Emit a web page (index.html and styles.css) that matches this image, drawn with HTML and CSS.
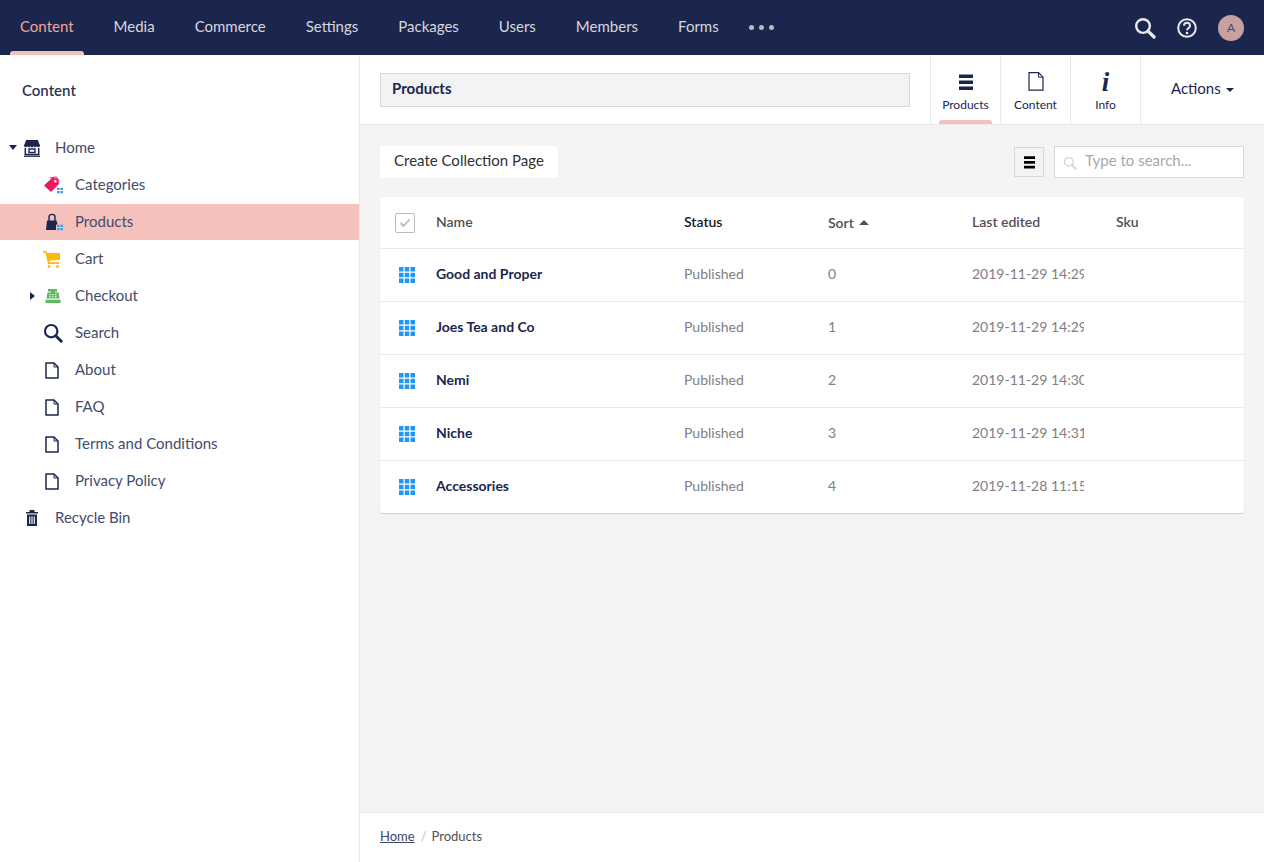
FILE: index.html
```html
<!DOCTYPE html>
<html lang="en">
<head>
    <meta charset="UTF-8">
    <meta name="viewport" content="width=device-width, initial-scale=1.0">
    <title>Content - Products</title>
    <link rel="stylesheet" href="styles.css">
</head>
<body>
    <svg class="defs" width="0" height="0" aria-hidden="true">
        <symbol id="i-search" viewBox="0 0 20 20">
            <circle cx="8.2" cy="8.2" r="6.2" fill="none" stroke="currentColor" stroke-width="2.2"/>
            <path d="M12.8 12.8l5.4 5.4" fill="none" stroke="currentColor" stroke-width="3" stroke-linecap="round"/>
        </symbol>
        <symbol id="i-doc" viewBox="0 0 14 17">
            <path d="M1 1h8l4 4v11H1z" fill="none" stroke="currentColor" stroke-width="1.5" stroke-linejoin="round"/>
            <path d="M9 1v4h4" fill="none" stroke="currentColor" stroke-width="1"/>
        </symbol>
        <symbol id="i-dots" viewBox="0 0 16 16">
            <path d="M0 0h4.500v4.500H0zM5.750 0h4.500v4.500h-4.500zM11.500 0H16v4.500h-4.500zM0 5.750h4.500v4.500H0zM5.750 5.750h4.500v4.500h-4.500zM11.500 5.750H16v4.500h-4.500zM0 11.500h4.500V16H0zM5.750 11.500h4.500V16h-4.500zM11.500 11.500H16V16h-4.500z" fill="#2196f3"/>
        </symbol>
        <symbol id="i-mini" viewBox="0 0 7 7">
            <path d="M0 0h3v3H0zM4 0h3v3H4zM0 4h3v3H0zM4 4h3v3H4z" fill="#3f97f0"/>
        </symbol>
        <symbol id="i-lines" viewBox="0 0 14 16">
            <path d="M0 0h14v3.600H0zM0 6h14v3.600H0zM0 12h14v3.600H0z" fill="currentColor"/>
        </symbol>
    </svg>

    <header class="topbar">
        <nav class="mainnav">
            <a class="navitem active">Content</a>
            <a class="navitem">Media</a>
            <a class="navitem">Commerce</a>
            <a class="navitem">Settings</a>
            <a class="navitem">Packages</a>
            <a class="navitem">Users</a>
            <a class="navitem">Members</a>
            <a class="navitem">Forms</a>
            <span class="navmore"><i></i><i></i><i></i></span>
        </nav>
        <div class="topicons">
            <svg class="topicon" width="22" height="22"><use href="#i-search"/></svg>
            <svg class="topicon" width="22" height="22" viewBox="0 0 22 22">
                <circle cx="11" cy="11" r="8.800" fill="none" stroke="currentColor" stroke-width="2"/>
                <path d="M8 8.800c0-4 6-4 6 0 0 2.400-3 2.200-3 4.400" fill="none" stroke="currentColor" stroke-width="2"/>
                <circle cx="11" cy="16" r="1.300" fill="currentColor"/>
            </svg>
            <span class="avatar">A</span>
        </div>
    </header>

    <div class="app">
        <aside class="sidebar">
            <h2 class="sidebar-title">Content</h2>
            <ul class="tree">
                <li class="treerow level0">
                    <span class="caret down"></span>
                    <svg class="treeicon shift" width="18" height="18" viewBox="0 0 18 18">
                        <path d="M3.200 1h11.600L17 6.600c0 1-.8 1.600-1.600 1.600-.9 0-1.600-.6-1.600-1.500 0 .9-.7 1.500-1.600 1.500s-1.600-.6-1.600-1.500c0 .9-.7 1.500-1.600 1.500s-1.600-.6-1.600-1.500c0 .9-.7 1.500-1.600 1.500S4.200 7.600 4.200 6.700c0 .9-.7 1.500-1.600 1.500C1.800 8.200 1 7.600 1 6.600z" fill="#1b264f"/>
                        <path d="M2.300 9v6.500h13.400V9" fill="none" stroke="#1b264f" stroke-width="1.500"/>
                        <path d="M6 10h6v3.500H6z" fill="none" stroke="#1b264f" stroke-width="1.400"/>
                        <path d="M1 17.200h16" stroke="#1b264f" stroke-width="1.300"/>
                    </svg>
                    <span>Home</span>
                </li>
                <li class="treerow level1">
                    <svg class="treeicon" width="20" height="18" viewBox="0 0 20 18">
                        <path d="M1.500 9.500L9 2.500l5.500.5 1 5L8 15.500z" fill="#f0185f" stroke="#f0185f" stroke-linejoin="round"/>
                        <path d="M7 1.800l6.500-.8 2.700 4.500" fill="none" stroke="#f0185f"/>
                        <circle cx="12.300" cy="5.300" r="1.200" fill="#fff"/>
                        <use href="#i-mini" x="14" y="11.500" width="6" height="6"/>
                    </svg>
                    <span>Categories</span>
                </li>
                <li class="treerow level1 selected">
                    <svg class="treeicon" width="20" height="18" viewBox="0 0 20 18">
                        <path d="M4 7.500h9.500l1 3.500-1.500 1v5H3z" fill="#1b264f"/>
                        <path d="M6 8V4c0-3.500 6-3.500 6 0v4" fill="none" stroke="#1b264f" stroke-width="1.400"/>
                        <use href="#i-mini" x="14" y="11.500" width="6" height="6"/>
                    </svg>
                    <span>Products</span>
                </li>
                <li class="treerow level1">
                    <svg class="treeicon shift" width="18" height="18" viewBox="0 0 18 18">
                        <path d="M0 1h3.500l.8 2H17v6.800l-10.500 1 .2 1.400H16v1.800H5L2.500 2.800H0z" fill="#fdb913"/>
                        <circle cx="6" cy="16.500" r="1.400" fill="#fdb913"/>
                        <circle cx="14.500" cy="16.500" r="1.400" fill="#fdb913"/>
                    </svg>
                    <span>Cart</span>
                </li>
                <li class="treerow level1">
                    <span class="caret right"></span>
                    <svg class="treeicon" width="18" height="18" viewBox="0 0 18 18">
                        <path d="M4 2h9v2.500h-2v1h3.500l1 6H2.500l1-6H7v-1H4z" fill="#5cb85c"/>
                        <path d="M5.500 7h1.300v1.300H5.500zM8.300 7h1.300v1.300H8.300zM11.100 7h1.300v1.300h-1.300zM5.500 9.300h1.300v1.300H5.500zM8.300 9.300h1.300v1.300H8.300zM11.100 9.300h1.300v1.300h-1.300z" fill="#fff"/>
                        <path d="M1.500 12.700h15V16h-15z" fill="#5cb85c"/>
                    </svg>
                    <span>Checkout</span>
                </li>
                <li class="treerow level1">
                    <svg class="treeicon navy" width="20" height="20"><use href="#i-search"/></svg>
                    <span>Search</span>
                </li>
                <li class="treerow level1">
                    <svg class="treeicon navy shift" width="18" height="17"><use href="#i-doc"/></svg>
                    <span>About</span>
                </li>
                <li class="treerow level1">
                    <svg class="treeicon navy shift" width="18" height="17"><use href="#i-doc"/></svg>
                    <span>FAQ</span>
                </li>
                <li class="treerow level1">
                    <svg class="treeicon navy shift" width="18" height="17"><use href="#i-doc"/></svg>
                    <span>Terms and Conditions</span>
                </li>
                <li class="treerow level1">
                    <svg class="treeicon navy shift" width="18" height="17"><use href="#i-doc"/></svg>
                    <span>Privacy Policy</span>
                </li>
                <li class="treerow level0">
                    <svg class="treeicon navy shift" width="18" height="18" viewBox="0 0 18 18">
                        <path d="M3 3h12v1.600H3zM6.500 1h5v2h-5z" fill="currentColor"/>
                        <path d="M4 5.500h10V17H4z" fill="currentColor"/>
                        <path d="M6.200 7.500h1.100V15H6.200zM8.450 7.500h1.100V15h-1.100zM10.700 7.500h1.100V15h-1.100z" fill="#fff"/>
                    </svg>
                    <span>Recycle Bin</span>
                </li>
            </ul>
        </aside>

        <main class="editor">
            <div class="editor-head">
                <div class="namefield">Products</div>
                <div class="tabs">
                    <a class="tab active">
                        <svg class="tabicon" width="14" height="16"><use href="#i-lines"/></svg>
                        <span>Products</span>
                    </a>
                    <a class="tab">
                        <svg class="tabicon" width="16" height="19" viewBox="0 0 16 19">
                            <path d="M1 .7h9.500L15 5.200v13H1z" fill="none" stroke="#1b264f" stroke-width="1.200"/>
                            <path d="M10.500 .7v4.500H15" fill="none" stroke="#1b264f"/>
                        </svg>
                        <span>Content</span>
                    </a>
                    <a class="tab">
                        <span class="infoicon">i</span>
                        <span>Info</span>
                    </a>
                </div>
                <div class="actions">Actions <span class="caret small"></span></div>
            </div>

            <div class="editor-body">
                <div class="toolbar">
                    <button class="createbtn">Create Collection Page</button>
                    <div class="toolbar-right">
                        <span class="layoutbtn"><svg width="11" height="13"><use href="#i-lines"/></svg></span>
                        <label class="searchbox">
                            <svg class="searchicon" width="14" height="14"><use href="#i-search"/></svg>
                            <span>Type to search...</span>
                        </label>
                    </div>
                </div>

                <div class="listview">
                    <div class="row head">
                        <span class="check">
                            <svg width="12" height="10" viewBox="0 0 12 10"><path d="M1.500 5l3 3 6-6.500" fill="none" stroke="#bbb" stroke-width="1.800"/></svg>
                        </span>
                        <span class="cell">Name</span>
                        <span class="cell status">Status</span>
                        <span class="cell sort">Sort <i class="sortcaret"></i></span>
                        <span class="cell">Last edited</span>
                        <span class="cell">Sku</span>
                    </div>
                    <div class="row">
                        <svg class="rowicon" width="16" height="16"><use href="#i-dots"/></svg>
                        <span class="cell name">Good and Proper</span>
                        <span class="cell">Published</span>
                        <span class="cell">0</span>
                        <span class="cell edited">2019-11-29 14:29:33</span>
                        <span class="cell"></span>
                    </div>
                    <div class="row">
                        <svg class="rowicon" width="16" height="16"><use href="#i-dots"/></svg>
                        <span class="cell name">Joes Tea and Co</span>
                        <span class="cell">Published</span>
                        <span class="cell">1</span>
                        <span class="cell edited">2019-11-29 14:29:58</span>
                        <span class="cell"></span>
                    </div>
                    <div class="row">
                        <svg class="rowicon" width="16" height="16"><use href="#i-dots"/></svg>
                        <span class="cell name">Nemi</span>
                        <span class="cell">Published</span>
                        <span class="cell">2</span>
                        <span class="cell edited">2019-11-29 14:30:21</span>
                        <span class="cell"></span>
                    </div>
                    <div class="row">
                        <svg class="rowicon" width="16" height="16"><use href="#i-dots"/></svg>
                        <span class="cell name">Niche</span>
                        <span class="cell">Published</span>
                        <span class="cell">3</span>
                        <span class="cell edited">2019-11-29 14:31:05</span>
                        <span class="cell"></span>
                    </div>
                    <div class="row">
                        <svg class="rowicon" width="16" height="16"><use href="#i-dots"/></svg>
                        <span class="cell name">Accessories</span>
                        <span class="cell">Published</span>
                        <span class="cell">4</span>
                        <span class="cell edited">2019-11-28 11:15:40</span>
                        <span class="cell"></span>
                    </div>
                </div>
            </div>

            <footer class="editor-foot">
                <a class="crumb">Home</a>
                <span class="crumbsep">/</span>
                <span>Products</span>
            </footer>
        </main>
    </div>
</body>
</html>
```

FILE: styles.css
```css
* {
    box-sizing: border-box;
}

html, body {
    height: 100%;
}

body {
    margin: 0;
    display: flex;
    flex-direction: column;
    overflow: hidden;
    font-family: 'Lato', sans-serif;
    font-size: 15px;
    color: #1b264f;
    background: #fff;
}

.defs {
    position: absolute;
}

/* top bar */
.topbar {
    height: 55px;
    flex: none;
    display: flex;
    justify-content: space-between;
    background: #1b264f;
}

.mainnav {
    display: flex;
    align-items: center;
}

.navitem {
    position: relative;
    height: 55px;
    line-height: 52px;
    padding: 0 20px;
    color: #d8d7d9;
}

.navitem.active {
    color: #f5a692;
}

.navitem.active::after {
    content: "";
    position: absolute;
    left: 10px;
    right: 10px;
    bottom: 0;
    height: 4px;
    border-radius: 3px 3px 0 0;
    background: #f5c1bc;
}

.navmore {
    display: flex;
    gap: 5px;
    margin-left: 10px;
}

.navmore i {
    width: 5px;
    height: 5px;
    border-radius: 50%;
    background: #bbbabf;
}

.topicons {
    display: flex;
    align-items: center;
    padding-right: 20px;
    color: #e9e9eb;
}

.topicon {
    margin-right: 20px;
}

.topicon:first-child {
    margin-top: 1px;
}

.avatar {
    width: 26px;
    height: 26px;
    border-radius: 50%;
    background: #c9a0a0;
    color: #4a4a6a;
    font-size: 12px;
    line-height: 26px;
    text-align: center;
}

.app {
    flex: 1;
    display: flex;
    min-height: 0;
}

/* tree */
.sidebar {
    width: 360px;
    flex: none;
    border-right: 1px solid #e9e9eb;
    background: #fff;
}

.sidebar-title {
    margin: 0;
    padding: 26px 22px 0;
    height: 75px;
    font-size: 15px;
    line-height: 18px;
    font-weight: 600;
    color: #2c3558;
}

.tree {
    margin: 0;
    padding: 0;
    list-style: none;
}

.treerow {
    position: relative;
    height: 36px;
    margin-bottom: 1px;
    display: flex;
    align-items: center;
    color: #444b6b;
}

.treerow > span:last-child {
    padding-bottom: 2px;
}

.treerow.level0 {
    padding-left: 23px;
}

.treerow.level1 {
    padding-left: 43px;
}

.treerow.selected {
    background: #f5c1bc;
}

.treeicon {
    width: 20px;
    margin-right: 12px;
    flex: none;
}

.treeicon.shift {
    margin-left: -1px;
    margin-right: 13px;
}

.navy {
    color: #1b264f;
}

.caret {
    width: 0;
    height: 0;
    display: inline-block;
}

.caret.down {
    position: absolute;
    left: 9px;
    top: 15px;
    border-left: 4px solid transparent;
    border-right: 4px solid transparent;
    border-top: 5px solid #1b264f;
}

.caret.right {
    position: absolute;
    left: 30px;
    top: 14px;
    border-top: 4px solid transparent;
    border-bottom: 4px solid transparent;
    border-left: 5px solid #1b264f;
}

.caret.small {
    margin-left: 1px;
    vertical-align: 2px;
    border-left: 4px solid transparent;
    border-right: 4px solid transparent;
    border-top: 4px solid #1b264f;
}

/* editor */
.editor {
    flex: 1;
    min-width: 0;
    display: flex;
    flex-direction: column;
    background: #f5f3f4;
}

.editor-head {
    height: 70px;
    flex: none;
    display: flex;
    align-items: stretch;
    background: #fff;
    border-bottom: 1px solid #e9e9eb;
}

.namefield {
    width: 530px;
    height: 34px;
    margin: 18px 20px 0;
    padding-left: 11px;
    line-height: 28px;
    font-weight: 700;
    color: #1b264f;
    background: #f3f3f5;
    border: 1px solid #d8d7d9;
}

.tabs {
    display: flex;
}

.tab {
    position: relative;
    width: 70px;
    display: flex;
    flex-direction: column;
    align-items: center;
    font-size: 12px;
    color: #1b264f;
    border-left: 1px solid #e9e9eb;
}

.tab:last-child {
    border-right: 1px solid #e9e9eb;
    width: 71px;
}

.tab.active::after {
    content: "";
    position: absolute;
    left: 8px;
    right: 8px;
    bottom: 0;
    height: 4px;
    border-radius: 3px 3px 0 0;
    background: #f5c1bc;
}

.tabicon {
    height: 19px;
    margin: 18px 0 5px;
}

.tab:nth-child(2) .tabicon {
    margin-top: 17px;
    margin-bottom: 6px;
}

.infoicon {
    height: 19px;
    margin: 18px 0 5px;
    font-family: 'Liberation Serif', serif;
    font-size: 27px;
    font-style: italic;
    font-weight: 700;
    line-height: 19px;
}

.actions {
    flex: 1;
    padding: 23px 0 0 30px;
    line-height: 20px;
    color: #1b264f;
}

.editor-body {
    flex: 1;
    padding: 21px 20px 0;
}

.toolbar {
    display: flex;
    align-items: center;
    justify-content: space-between;
    height: 32px;
    margin-bottom: 19px;
}

.createbtn {
    height: 32px;
    padding: 0 14px 4px;
    font: inherit;
    color: #303033;
    background: #fff;
    border: none;
    border-radius: 3px;
}

.toolbar-right {
    display: flex;
    align-items: center;
    gap: 10px;
}

.layoutbtn {
    width: 30px;
    height: 30px;
    display: flex;
    align-items: center;
    justify-content: center;
    color: #000;
    border: 1px solid #d8d7d9;
}

.searchbox {
    width: 190px;
    height: 32px;
    display: flex;
    align-items: center;
    padding: 0 0 4px 8px;
    gap: 8px;
    color: #a9a8ad;
    background: #fff;
    border: 1px solid #d8d7d9;
}

.searchicon {
    color: #d8d7d9;
    margin-top: 6px;
}

/* list view */
.listview {
    background: #fff;
    border-radius: 3px;
    box-shadow: 0 1px 1px rgba(0, 0, 0, 0.16);
}

.row {
    height: 53px;
    display: grid;
    grid-template-columns: 56px 248px 144px 144px 144px 1fr;
    align-items: center;
    border-bottom: 1px solid #e9e9eb;
    font-size: 14px;
    color: #7f7e83;
}

.row:last-child {
    height: 52px;
    border-bottom: none;
}

.cell {
    padding-bottom: 4px;
}

.row.head {
    height: 52px;
    font-weight: 600;
    color: #515054;
}

.row.head .cell {
    padding-bottom: 2px;
}

.row.head .cell.status {
    color: #1a1a1a;
}

.row.head .cell.sort {
    padding-bottom: 0;
}

.check {
    width: 20px;
    height: 20px;
    margin-left: 15px;
    display: flex;
    align-items: center;
    justify-content: center;
    border: 1px solid #bbbabf;
    border-radius: 2px;
}

.rowicon {
    margin-left: 19px;
}

.cell.name {
    font-weight: 700;
    color: #1b264f;
}

.sortcaret {
    display: inline-block;
    margin-left: 2px;
    vertical-align: 3px;
    border-left: 5px solid transparent;
    border-right: 5px solid transparent;
    border-bottom: 5px solid #515054;
}

.cell.edited {
    width: 112px;
    overflow: hidden;
    white-space: nowrap;
}

/* breadcrumb */
.editor-foot {
    height: 50px;
    flex: none;
    display: flex;
    align-items: center;
    padding: 0 20px 4px;
    font-size: 13px;
    color: #515054;
    background: #fff;
    border-top: 1px solid #e9e9eb;
}

.crumb {
    color: #3e4565;
    text-decoration: underline;
}

.crumbsep {
    margin: 0 5px 0 6px;
    color: #bbbabf;
}
```
